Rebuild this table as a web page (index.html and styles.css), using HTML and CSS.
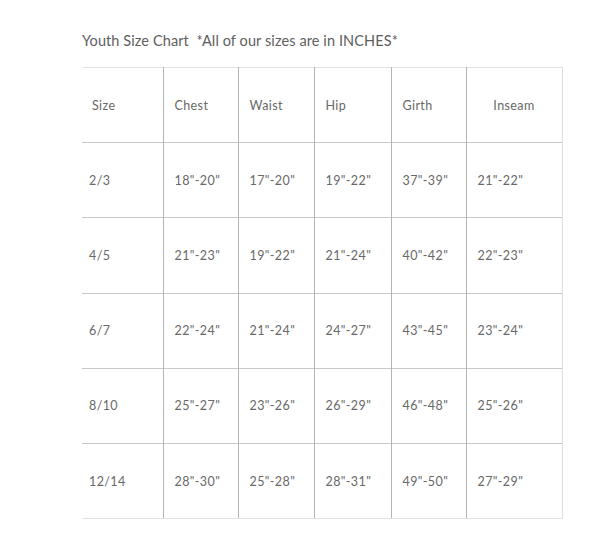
FILE: index.html
```html
<!DOCTYPE html>
<html>
<head>
<meta charset="utf-8">
<link rel="stylesheet" href="styles.css">
</head>
<body>
<div class="wrap">
  <p class="title">Youth Size Chart&nbsp; *All of our sizes are in INCHES*</p>
  <table class="chart">
    <colgroup>
      <col class="c1"><col class="c2"><col class="c3"><col class="c4"><col class="c5"><col class="c6">
    </colgroup>
    <tr class="head">
      <td class="first">Size</td><td>Chest</td><td>Waist</td><td>Hip</td><td>Girth</td><td class="center">Inseam</td>
    </tr>
    <tr><td class="first">2/3</td><td>18"-20"</td><td>17"-20"</td><td>19"-22"</td><td>37"-39"</td><td>21"-22"</td></tr>
    <tr><td class="first">4/5</td><td>21"-23"</td><td>19"-22"</td><td>21"-24"</td><td>40"-42"</td><td>22"-23"</td></tr>
    <tr><td class="first">6/7</td><td>22"-24"</td><td>21"-24"</td><td>24"-27"</td><td>43"-45"</td><td>23"-24"</td></tr>
    <tr><td class="first">8/10</td><td>25"-27"</td><td>23"-26"</td><td>26"-29"</td><td>46"-48"</td><td>25"-26"</td></tr>
    <tr class="last"><td class="first">12/14</td><td>28"-30"</td><td>25"-28"</td><td>28"-31"</td><td>49"-50"</td><td>27"-29"</td></tr>
  </table>
</div>
</body>
</html>
```

FILE: styles.css
```css
html, body {
  margin: 0;
  padding: 0;
  background: #ffffff;
}
body {
  font-family: "Source Sans Pro", Lato, "Open Sans", sans-serif;
  color: #666666;
}
.wrap {
  padding: 31px 0 0 82px;
}
.title {
  margin: 0 0 16px 0;
  font-size: 14.5px;
  line-height: 20px;
  letter-spacing: 0.1px;
  color: #5e5e5e;
}
.chart {
  border-collapse: collapse;
  table-layout: fixed;
  width: 480px;
}
.c1 { width: 81px; }
.c2 { width: 75px; }
.c3 { width: 76px; }
.c4 { width: 77px; }
.c5 { width: 75px; }
.c6 { width: 96px; }
.chart td {
  height: 74.2px;
  padding: 0 0 0 11px;
  font-size: 12.5px;
  letter-spacing: 0.4px;
  color: #686868;
  border-top: 1px solid #c8c8c8;
  border-left: 1px solid #b4b4b4;
  border-right: 1px solid #b4b4b4;
  vertical-align: middle;
  white-space: nowrap;
}
.chart td.first {
  border-left: none;
  padding-left: 7px;
}
.chart tr.head td {
  border-top: 1px solid #e2e2e2;
}
.chart tr.head td.first {
  padding-left: 10px;
}
.chart td:last-child {
  border-right: 1px solid #dedede;
}
.chart td.center {
  text-align: center;
  padding-left: 0;
}
.chart tr.last td {
  border-bottom: 1px solid #e2e2e2;
}
```
